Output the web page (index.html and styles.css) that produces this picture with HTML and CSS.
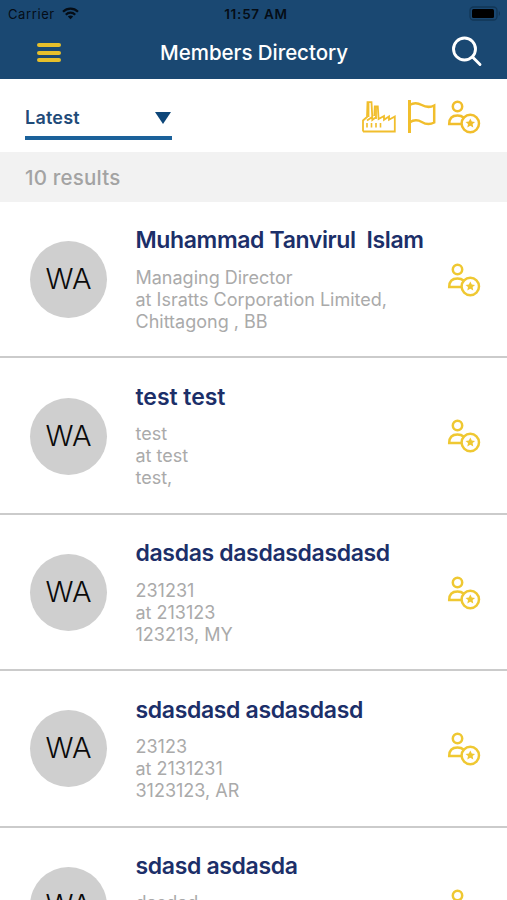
FILE: index.html
```html
<!DOCTYPE html>
<html lang="en">
<head>
  <meta charset="UTF-8" />
  <meta name="viewport" content="width=device-width, initial-scale=1.0" />
  <title>Members Directory</title>
  <link rel="stylesheet" href="styles.css">
</head>
<body>

  <!-- shared icon -->
  <svg class="sprite" width="0" height="0">
    <symbol id="member" viewBox="0 0 34 34">
      <g fill="none" stroke="currentColor" stroke-width="2.5">
        <circle cx="10.5" cy="6.5" r="4.7" />
        <path d="M14 24H2.2c0-5.800 3.300-8.500 8.300-8.500 2.600 0 4.500.6 6 2" />
        <circle cx="23.3" cy="23.5" r="8.700" />
      </g>
      <path fill="currentColor" d="M23.300 18.500l1.500 3 3.300.4-2.500 2.200.7 3.300-3-1.700-3 1.700.7-3.300-2.500-2.200 3.300-.4z" />
    </symbol>
  </svg>

  <header class="header">
    <div class="status-bar">
      <div class="carrier">
        <span>Carrier</span>
        <svg width="17" height="13" viewBox="0 0 17 13">
          <g fill="none" stroke="#050d16" stroke-width="2.2">
            <path d="M1 4.700c4.300-4.200 10.700-4.200 15 0" />
            <path d="M3.800 7.700c2.700-2.700 6.700-2.700 9.400 0" />
          </g>
          <path fill="#050d16" d="M8.500 12.300L5.800 9.500c1.500-1.400 3.900-1.400 5.400 0z" />
        </svg>
      </div>
      <div class="time">11:57 AM</div>
      <div class="battery">
        <svg width="33" height="15" viewBox="0 0 33 15">
          <rect x="1" y="1" width="27" height="13" rx="3.5" fill="none" stroke="#123656" stroke-width="1.3" />
          <rect x="3" y="3" width="22" height="9" rx="1.5" fill="#000" />
          <path d="M29.800 5v5c1.600-.8 1.600-4.200 0-5z" fill="#123656" />
        </svg>
      </div>
    </div>
    <div class="nav-bar">
      <div class="menu">
        <span></span>
        <span></span>
        <span></span>
      </div>
      <h1>Members Directory</h1>
      <svg class="search" width="32" height="32" viewBox="0 0 32 32">
        <g fill="none" stroke="#fff" stroke-width="2.9" stroke-linecap="round">
          <circle cx="13.5" cy="13" r="11" />
          <path d="M21.500 21l7.500 7.500" />
        </g>
      </svg>
    </div>
  </header>

  <div class="filters">
    <div class="select">
      <span>Latest</span>
      <i class="arrow"></i>
    </div>
    <div class="filter-icons">
      <svg class="factory" width="35" height="33" viewBox="0 0 35 33">
        <g fill="none" stroke="#f1be2c" stroke-width="1.8">
          <path d="M2 31.500V20.500l4-3.500L6.500 2.200h4l.8 15.300M13.300 16l.5-9.500h3l.8 12.500 5.400-3v3.800l5-3.300v3.300l5.800-3.300v15H2M6 20.500l5.300-3.500v3l4-3" />
          <path d="M7.500 3v14M15 7v12" />
          <path d="M6 23v4.500M10.500 23v4.500M15 23v4.500M19.500 23v4.500" stroke-width="1.6" />
        </g>
      </svg>
      <svg class="flag" width="29" height="34" viewBox="0 0 29 34">
        <g fill="none" stroke="#f1be2c" stroke-width="2.5">
          <path d="M2.500 0v33" stroke-width="3" />
          <path d="M2.500 5c4.500-2.600 8-2.300 12.200 0 4.300 2.300 8.300 2.600 12.500.5v17c-4.200 2.300-8.200 2-12.500-.5-4.200-2.400-7.700-2.500-12.200.5" />
        </g>
      </svg>
      <svg class="member-icon" width="34" height="34"><use href="#member" /></svg>
    </div>
  </div>

  <div class="results">10 results</div>

  <div class="members">
    <div class="member">
      <div class="avatar">WA</div>
      <div class="info">
        <h2 class="long-name">Muhammad Tanvirul&nbsp; Islam</h2>
        <p>Managing Director</p>
        <p>at Isratts Corporation Limited,</p>
        <p>Chittagong , BB</p>
      </div>
      <svg class="member-icon" width="34" height="34"><use href="#member" /></svg>
    </div>
    <div class="member">
      <div class="avatar">WA</div>
      <div class="info">
        <h2 class="short-name">test test</h2>
        <p>test</p>
        <p>at test</p>
        <p>test,</p>
      </div>
      <svg class="member-icon" width="34" height="34"><use href="#member" /></svg>
    </div>
    <div class="member">
      <div class="avatar">WA</div>
      <div class="info">
        <h2>dasdas dasdasdasdasd</h2>
        <p>231231</p>
        <p>at 213123</p>
        <p>123213, MY</p>
      </div>
      <svg class="member-icon" width="34" height="34"><use href="#member" /></svg>
    </div>
    <div class="member">
      <div class="avatar">WA</div>
      <div class="info">
        <h2>sdasdasd asdasdasd</h2>
        <p>23123</p>
        <p>at 2131231</p>
        <p>3123123, AR</p>
      </div>
      <svg class="member-icon" width="34" height="34"><use href="#member" /></svg>
    </div>
    <div class="member">
      <div class="avatar">WA</div>
      <div class="info">
        <h2>sdasd asdasda</h2>
        <p>dasdad</p>
      </div>
      <svg class="member-icon" width="34" height="34"><use href="#member" /></svg>
    </div>
  </div>

</body>
</html>
```
FILE: styles.css
```css
* {
  box-sizing: border-box;
}

body {
  margin: 0;
  height: 900px;
  overflow: hidden;
  font-family: Inter, 'Liberation Sans', sans-serif;
  background-color: #fff;
}

h1, h2, p {
  margin: 0;
}

svg {
  display: block;
  flex: none;
}

.sprite {
  position: absolute;
}

.header {
  height: 79px;
  background-color: #1a4872;
}

.status-bar {
  display: grid;
  grid-template-columns: 1fr auto 1fr;
  align-items: center;
  height: 27px;
  padding: 0 5px 0 8px;
  font-size: 13px;
  color: #050d16;
}

.carrier {
  display: flex;
  align-items: center;
  gap: 7px;
  letter-spacing: 0.6px;
}

.time {
  padding-left: 2px;
  font-size: 13.5px;
  font-weight: 600;
  letter-spacing: 0.75px;
}

.battery {
  justify-self: end;
}

.nav-bar {
  display: flex;
  align-items: center;
  justify-content: space-between;
  height: 50px;
  padding: 0 24px 0 37px;
}

.menu {
  display: flex;
  flex-direction: column;
  gap: 3.5px;
  width: 24px;
  padding-top: 1px;
}

.menu span {
  height: 4px;
  border-radius: 2px;
  background-color: #e6bf2b;
}

.nav-bar h1 {
  margin-right: 4px;
  padding-top: 1px;
  font-size: 20.5px;
  font-weight: 500;
  letter-spacing: -0.05px;
  color: #fff;
}

.filters {
  display: flex;
  justify-content: space-between;
  height: 73px;
  padding: 20px 26px 0 25px;
}

.select {
  display: flex;
  align-items: center;
  justify-content: space-between;
  width: 147px;
  height: 41px;
  border-bottom: 4px solid #1b619a;
  font-size: 18px;
  font-weight: 600;
  letter-spacing: 0.2px;
  color: #1f4b79;
}

.arrow {
  margin-right: 1px;
  border-left: 8.5px solid transparent;
  border-right: 8.5px solid transparent;
  border-top: 12px solid #0d4679;
}

.filter-icons {
  display: flex;
  gap: 11px;
  padding-top: 1px;
  color: #f1be2c;
}

.results {
  height: 50px;
  padding-left: 25px;
  line-height: 51px;
  font-size: 20.5px;
  font-weight: 500;
  letter-spacing: 0.2px;
  color: #a3a3a3;
  background-color: #f2f2f2;
}

.member {
  display: flex;
  height: 156.4px;
  padding: 0 26px 0 30px;
  border-bottom: 2px solid #cbcbcb;
}

.avatar {
  flex: none;
  width: 77px;
  height: 77px;
  margin-top: 39.3px;
  border-radius: 50%;
  background-color: #cfcfcf;
  font-size: 29px;
  font-weight: 300;
  line-height: 75px;
  text-align: center;
  color: #0a0a0a;
}

.info {
  flex: 1;
  padding: 24.4px 0 0 28.5px;
  white-space: nowrap;
}

.info h2 {
  margin-bottom: 12.5px;
  font-size: 23px;
  font-weight: 600;
  letter-spacing: -0.35px;
  line-height: 28px;
  color: #1c2f69;
}

.info .long-name {
  letter-spacing: -0.37px;
}

.info .short-name {
  letter-spacing: -0.05px;
}

.info p {
  font-size: 18px;
  line-height: 22px;
  color: #aaa;
}

.member .member-icon {
  margin-top: 61px;
  color: #efc832;
}
```
